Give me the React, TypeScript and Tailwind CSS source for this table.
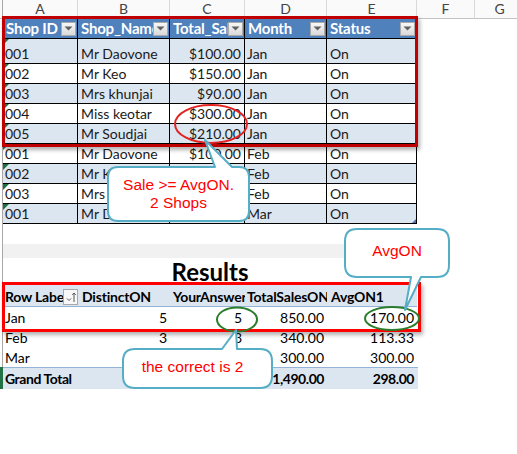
import React from "react";

const cols = ["w-[75px]", "w-[92px]", "w-[75px]", "w-[82px]", "w-[90px]"];

const shops = [
    { id: "001", name: "Mr Daovone", sale: "$100.00", month: "Jan", band: true, tall: true },
    { id: "002", name: "Mr Keo", sale: "$150.00", month: "Jan", band: false },
    { id: "003", name: "Mrs khunjai", sale: "$90.00", month: "Jan", band: true },
    { id: "004", name: "Miss keotar", sale: "$300.00", month: "Jan", band: false },
    { id: "005", name: "Mr Soudjai", sale: "$210.00", month: "Jan", band: true },
    { id: "001", name: "Mr Daovone", sale: "$100.00", month: "Feb", band: false },
    { id: "002", name: "Mr Keo", sale: "$150.00", month: "Feb", band: true },
    { id: "003", name: "Mrs khunjai", sale: "$90.00", month: "Feb", band: false },
    { id: "001", name: "Mr Daovone", sale: "$100.00", month: "Mar", band: true },
];

// Mar values sit under the callout, so they are left blank
const pivot = [
    { label: "Jan", d: "5", y: "5", t: "850.00", a: "170.00" },
    { label: "Feb", d: "3", y: "3", t: "340.00", a: "113.33" },
    { label: "Mar", d: "", y: "", t: "300.00", a: "300.00" },
];

const Gutter = ({ green }: { green?: boolean }) => (
    <div className={`w-[3px] shrink-0 border-r ${green ? "bg-[#217346] border-[#217346]" : "border-[#a8a8a8]"}`} />
);

const DropBtn = () => (
    <div className="w-[15px] h-[14px] shrink-0 flex items-center justify-center border border-[#a9a9a9] bg-gradient-to-b from-[#f7f7f7] to-[#d9d9d9]">
        <svg width="9" height="5" viewBox="0 0 9 5">
            <path d="M0.5 0.5 H8.5 L4.5 4.5 Z" fill="#606060" />
        </svg>
    </div>
);

const SortBtn = () => (
    <div className="w-[15px] h-[16px] shrink-0 flex items-center justify-center border border-[#a9a9a9] bg-[#f7f7f7]">
        <svg width="12" height="12" viewBox="0 0 12 12">
            <path d="M2 7.5 L4 9.5 L6 7.5" fill="none" stroke="#555" strokeWidth="1" />
            <path d="M9 11 V2 M7.2 3.8 L9 2 L10.8 3.8" fill="none" stroke="#555" strokeWidth="1" />
        </svg>
    </div>
);

export default function App() {
    return (
        <div className="relative w-[517px] h-[454px] overflow-hidden bg-white font-['Lato','Liberation_Sans',sans-serif] text-[14px] text-[#1a1a1a]">
            {/* column letters */}
            <div className="flex h-[19px] border-b border-[#c4c4c4] bg-[#fafafa] text-[#444]">
                <Gutter />
                {["A", "B", "C", "D", "E"].map((c, i) => (
                    <div key={c} className={`${cols[i]} shrink-0 border-r border-[#d9d9d9] flex items-center justify-center leading-none`}>
                        {c}
                    </div>
                ))}
                <div className="w-[58px] shrink-0 border-r border-[#d9d9d9] flex items-center justify-center leading-none">F</div>
                <div className="w-[50px] shrink-0 border-r border-[#d9d9d9] flex items-center justify-center leading-none">G</div>
            </div>

            {/* table header */}
            <div className="flex h-[20px]">
                <Gutter />
                {["Shop ID", "Shop_Name", "Total_Sales", "Month", "Status"].map((h, i) => (
                    <div key={h} className={`${cols[i]} shrink-0 flex items-center bg-[#4f81bd] border-r border-b border-black pl-[3px] pr-[1px] text-white font-bold text-[15px] tracking-[-0.2px]`}>
                        <span className="flex-1 min-w-0 overflow-hidden whitespace-nowrap leading-none">{h}</span>
                        <DropBtn />
                    </div>
                ))}
            </div>

            {/* table rows */}
            {shops.map((r, idx) => (
                <div key={idx} className={`flex ${r.tall ? "h-[25px]" : "h-[20px]"}`}>
                    <Gutter />
                    <div className={`${cols[0]} ${r.band ? "bg-[#dce6f1]" : "bg-white"} relative shrink-0 flex items-end pb-[2px] px-[2px] border-r border-b border-black leading-none`}>
                        <div className="absolute left-0 top-0 w-0 h-0 border-t-[6px] border-r-[6px] border-t-[#1e7145] border-r-transparent" />
                        {r.id}
                    </div>
                    <div className={`${cols[1]} ${r.band ? "bg-[#dce6f1]" : "bg-white"} shrink-0 flex items-end pb-[2px] px-[3px] border-r border-b border-black leading-none whitespace-nowrap overflow-hidden`}>
                        {r.name}
                    </div>
                    <div className={`${cols[2]} ${r.band ? "bg-[#dce6f1]" : "bg-white"} shrink-0 flex items-end justify-end pb-[2px] px-[3px] border-r border-b border-black leading-none`}>
                        {r.sale}
                    </div>
                    <div className={`${cols[3]} ${r.band ? "bg-[#dce6f1]" : "bg-white"} shrink-0 flex items-end pb-[2px] px-[2px] border-r border-b border-black leading-none`}>
                        {r.month}
                    </div>
                    <div className={`${cols[4]} ${r.band ? "bg-[#dce6f1]" : "bg-white"} relative shrink-0 flex items-end pb-[2px] px-[3px] border-r border-b border-black leading-none`}>
                        On
                        {idx === shops.length - 1 && (
                            <div className="absolute right-0 bottom-0 w-0 h-0 border-b-[4px] border-l-[4px] border-b-[#4f6fb8] border-l-transparent" />
                        )}
                    </div>
                </div>
            ))}

            {/* empty row + grey band */}
            <div className="flex h-[20px]">
                <Gutter />
            </div>
            <div className="flex h-[14px]">
                <Gutter />
                <div className="w-[342px] bg-[#f1f1f1]" />
            </div>

            {/* Results title */}
            <div className="flex h-[27px]">
                <Gutter />
                <div className="w-[414px] flex items-center justify-center font-bold text-[24px] leading-none text-black">Results</div>
            </div>

            {/* pivot header */}
            <div className="flex h-[22px]">
                <Gutter />
                <div className="flex bg-[#dce6f1] border-b border-[#95b3d7] font-bold text-black tracking-[-0.2px]">
                    <div className={`${cols[0]} flex items-end pb-[1px] pl-[2px]`}>
                        <span className="flex-1 min-w-0 overflow-hidden whitespace-nowrap leading-none pb-[1px]">Row Labels</span>
                        <SortBtn />
                    </div>
                    <div className={`${cols[1]} flex items-end pb-[2px] pl-[4px] whitespace-nowrap overflow-hidden leading-none`}>DistinctON</div>
                    <div className={`${cols[2]} flex items-end pb-[2px] pl-[3px] whitespace-nowrap overflow-hidden leading-none`}>YourAnswer</div>
                    <div className={`${cols[3]} flex items-end pb-[2px] pl-[2px] whitespace-nowrap overflow-hidden leading-none`}>TotalSalesON</div>
                    <div className={`${cols[4]} flex items-end pb-[2px] pl-[4px] whitespace-nowrap overflow-hidden leading-none`}>AvgON1</div>
                </div>
            </div>

            {/* pivot rows */}
            {pivot.map((p) => (
                <div key={p.label} className="flex h-[20px] text-black">
                    <Gutter />
                    <div className={`${cols[0]} flex items-end pb-[2px] pl-[2px] leading-none`}>{p.label}</div>
                    <div className={`${cols[1]} flex items-end justify-end pb-[2px] pr-[3px] leading-none`}>{p.d}</div>
                    <div className={`${cols[2]} flex items-end justify-end pb-[2px] pr-[3px] leading-none`}>{p.y}</div>
                    <div className={`${cols[3]} flex items-end justify-end pb-[2px] pr-[3px] leading-none`}>{p.t}</div>
                    <div className={`${cols[4]} flex items-end justify-end pb-[2px] pr-[3px] leading-none`}>{p.a}</div>
                </div>
            ))}
            <div className="flex h-[22px] font-bold text-black tracking-[-0.45px]">
                <Gutter green />
                <div className="flex bg-[#dce6f1] border-t border-[#95b3d7]">
                    <div className={`${cols[0]} flex items-end pb-[3px] pl-[2px] leading-none whitespace-nowrap`}>Grand Total</div>
                    <div className={`${cols[1]}`} />
                    <div className={`${cols[2]}`} />
                    <div className={`${cols[3]} flex items-end justify-end pb-[3px] pr-[3px] leading-none`}>1,490.00</div>
                    <div className="w-[91px] flex items-end justify-end pb-[3px] pr-[4px] leading-none">298.00</div>
                </div>
            </div>

            {/* annotation borders */}
            <div className="absolute left-[2px] top-[16px] w-[416px] h-[131px] border-[3px] border-[#c00000] shadow-[2px_3px_4px_rgba(0,0,0,0.3)]" />
            <div className="absolute left-[2px] top-[282px] w-[419px] h-[50px] border-[3px] border-[#ff0000] shadow-[2px_3px_4px_rgba(0,0,0,0.3)]" />

            {/* ellipses and callouts */}
            <svg className="absolute left-0 top-0 pointer-events-none" width="517" height="454" viewBox="0 0 517 454">
                <ellipse cx="211" cy="124" rx="36" ry="19" fill="none" stroke="#e32222" strokeWidth="2" />
                <ellipse cx="237" cy="319.5" rx="20" ry="12" fill="none" stroke="#2a7d2a" strokeWidth="2" />
                <ellipse cx="392" cy="318.5" rx="27" ry="11.5" fill="none" stroke="#2a7d2a" strokeWidth="2" />
                <g fill="white" stroke="#55adc6" strokeWidth="2" strokeLinejoin="round">
                    <path d="M118 167 H215 L205 140 L232 167 H239 Q249 167 249 177 V211 Q249 221 239 221 H118 Q108 221 108 211 V177 Q108 167 118 167 Z" />
                    <path d="M357 229 H437 Q449 229 449 241 V265 Q449 277 437 277 H421 L405 310 L411 277 H357 Q345 277 345 265 V241 Q345 229 357 229 Z" />
                    <path d="M135 349 H222 L236 330 L237 349 H260 Q272 349 272 361 V376 Q272 388 260 388 H135 Q123 388 123 376 V361 Q123 349 135 349 Z" />
                </g>
            </svg>

            <div className="absolute left-[108px] top-[176px] w-[141px] text-center font-['Liberation_Sans',sans-serif] text-[15.5px] leading-[18px] text-[#ff0000]">
                Sale &gt;= AvgON.
                <br />2 Shops
            </div>
            <div className="absolute left-[345px] top-[241px] w-[104px] text-center font-['Liberation_Sans',sans-serif] text-[15.5px] leading-[20px] text-[#ff0000]">
                AvgON
            </div>
            <div className="absolute left-[123px] top-[357px] w-[139px] text-center font-['Liberation_Sans',sans-serif] text-[15.5px] leading-[20px] text-[#ff0000]">
                the correct is 2
            </div>
        </div>
    );
}
